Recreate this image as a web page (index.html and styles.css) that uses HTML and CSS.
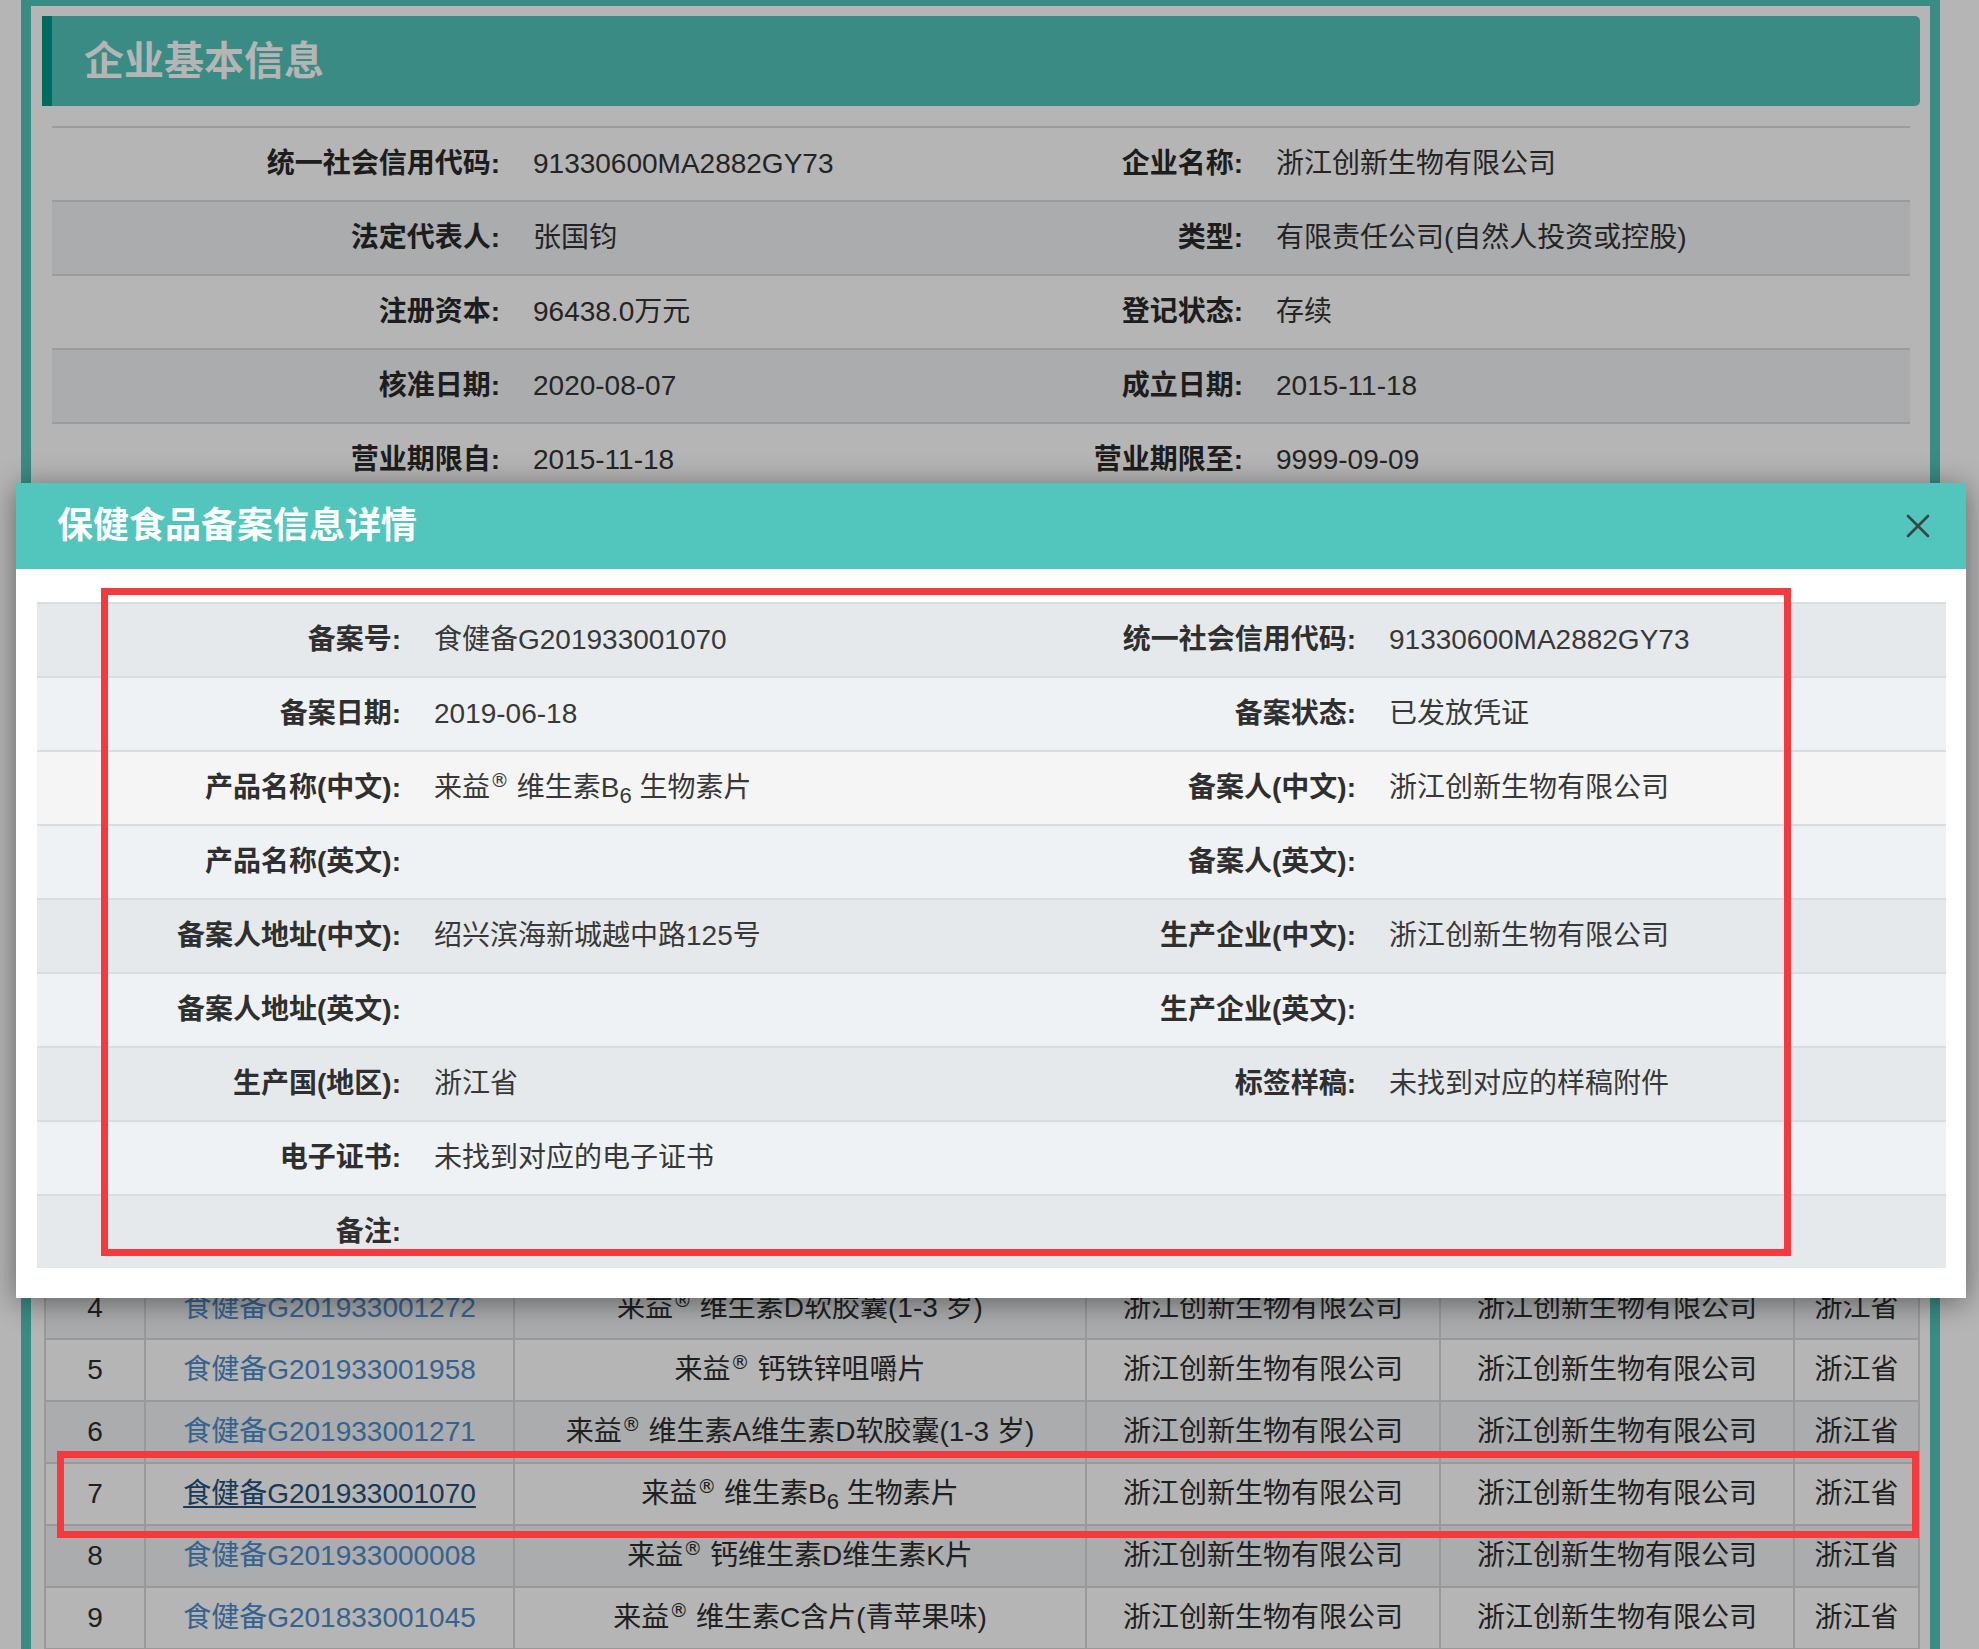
FILE: index.html
```html
<!DOCTYPE html>
<html lang="zh-CN">
<head>
<meta charset="utf-8">
<title>企业基本信息</title>
<link rel="stylesheet" href="styles.css">
</head>
<body>
<div class="panel">
  <div class="panel-head"><h2>企业基本信息</h2></div>
  <div class="info">
    <div class="info-row"><div class="lbl">统一社会信用代码:</div><div class="val">91330600MA2882GY73</div><div class="lbl">企业名称:</div><div class="val">浙江创新生物有限公司</div></div>
    <div class="info-row"><div class="lbl">法定代表人:</div><div class="val">张国钧</div><div class="lbl">类型:</div><div class="val">有限责任公司(自然人投资或控股)</div></div>
    <div class="info-row"><div class="lbl">注册资本:</div><div class="val">96438.0万元</div><div class="lbl">登记状态:</div><div class="val">存续</div></div>
    <div class="info-row"><div class="lbl">核准日期:</div><div class="val">2020-08-07</div><div class="lbl">成立日期:</div><div class="val">2015-11-18</div></div>
    <div class="info-row"><div class="lbl">营业期限自:</div><div class="val">2015-11-18</div><div class="lbl">营业期限至:</div><div class="val">9999-09-09</div></div>
    <div class="info-row"><div class="lbl"></div><div class="val"></div><div class="lbl"></div><div class="val"></div></div>
    <div class="info-row"><div class="lbl"></div><div class="val"></div><div class="lbl"></div><div class="val"></div></div>
    <div class="info-row"><div class="lbl"></div><div class="val"></div><div class="lbl"></div><div class="val"></div></div>
    <div class="info-row"><div class="lbl"></div><div class="val"></div><div class="lbl"></div><div class="val"></div></div>
    <div class="info-row"><div class="lbl"></div><div class="val"></div><div class="lbl"></div><div class="val"></div></div>
  </div>

  <div class="panel-head sec2"></div>
  <table class="list">
    <colgroup><col class="c1"><col class="c2"><col class="c3"><col class="c4"><col class="c5"><col class="c6"></colgroup>
    <thead>
      <tr><th></th><th></th><th></th><th></th><th></th><th></th></tr>
    </thead>
    <tbody>
      <tr><td></td><td></td><td></td><td></td><td></td><td></td></tr>
      <tr><td></td><td></td><td></td><td></td><td></td><td></td></tr>
      <tr><td></td><td></td><td></td><td></td><td></td><td></td></tr>
      <tr><td>4</td><td><a href="#">食健备G201933001272</a></td><td>来益<sup>®</sup> 维生素D软胶囊(1-3 岁)</td><td>浙江创新生物有限公司</td><td>浙江创新生物有限公司</td><td>浙江省</td></tr>
      <tr><td>5</td><td><a href="#">食健备G201933001958</a></td><td>来益<sup>®</sup> 钙铁锌咀嚼片</td><td>浙江创新生物有限公司</td><td>浙江创新生物有限公司</td><td>浙江省</td></tr>
      <tr><td>6</td><td><a href="#">食健备G201933001271</a></td><td>来益<sup>®</sup> 维生素A维生素D软胶囊(1-3 岁)</td><td>浙江创新生物有限公司</td><td>浙江创新生物有限公司</td><td>浙江省</td></tr>
      <tr><td>7</td><td><a href="#" class="active">食健备G201933001070</a></td><td>来益<sup>®</sup> 维生素B<sub>6</sub> 生物素片</td><td>浙江创新生物有限公司</td><td>浙江创新生物有限公司</td><td>浙江省</td></tr>
      <tr><td>8</td><td><a href="#">食健备G201933000008</a></td><td>来益<sup>®</sup> 钙维生素D维生素K片</td><td>浙江创新生物有限公司</td><td>浙江创新生物有限公司</td><td>浙江省</td></tr>
      <tr><td>9</td><td><a href="#">食健备G201833001045</a></td><td>来益<sup>®</sup> 维生素C含片(青苹果味)</td><td>浙江创新生物有限公司</td><td>浙江创新生物有限公司</td><td>浙江省</td></tr>
    </tbody>
  </table>
</div>

<div class="mask"></div>
<div class="mark mark-row"></div>

<div class="modal">
  <div class="modal-head">
    <h3>保健食品备案信息详情</h3>
    <svg class="close" width="26" height="26" viewBox="0 0 26 26"><path d="M3 3 L23 23 M23 3 L3 23" stroke="#374544" stroke-width="2.6" fill="none" stroke-linecap="round"/></svg>
  </div>
  <div class="modal-body">
    <div class="detail">
      <div class="d-row"><div class="lbl">备案号:</div><div class="val">食健备G201933001070</div><div class="lbl">统一社会信用代码:</div><div class="val">91330600MA2882GY73</div></div>
      <div class="d-row"><div class="lbl">备案日期:</div><div class="val">2019-06-18</div><div class="lbl">备案状态:</div><div class="val">已发放凭证</div></div>
      <div class="d-row hover"><div class="lbl">产品名称(中文):</div><div class="val">来益<sup>®</sup> 维生素B<sub>6</sub> 生物素片</div><div class="lbl">备案人(中文):</div><div class="val">浙江创新生物有限公司</div></div>
      <div class="d-row"><div class="lbl">产品名称(英文):</div><div class="val"></div><div class="lbl">备案人(英文):</div><div class="val"></div></div>
      <div class="d-row"><div class="lbl">备案人地址(中文):</div><div class="val">绍兴滨海新城越中路125号</div><div class="lbl">生产企业(中文):</div><div class="val">浙江创新生物有限公司</div></div>
      <div class="d-row"><div class="lbl">备案人地址(英文):</div><div class="val"></div><div class="lbl">生产企业(英文):</div><div class="val"></div></div>
      <div class="d-row"><div class="lbl">生产国(地区):</div><div class="val">浙江省</div><div class="lbl">标签样稿:</div><div class="val">未找到对应的样稿附件</div></div>
      <div class="d-row"><div class="lbl">电子证书:</div><div class="val">未找到对应的电子证书</div><div class="lbl"></div><div class="val"></div></div>
      <div class="d-row"><div class="lbl">备注:</div><div class="val"></div><div class="lbl"></div><div class="val"></div></div>
    </div>
    <div class="mark mark-detail"></div>
  </div>
</div>
</body>
</html>
```

FILE: styles.css
```css
* { box-sizing: border-box; }

html, body {
  margin: 0;
  padding: 0;
}

body {
  position: relative;
  width: 1979px;
  height: 1649px;
  overflow: hidden;
  background: #ffffff;
  font-family: "Liberation Sans", "Noto Sans CJK SC", sans-serif;
  font-size: 28px;
  line-height: 34px;
  color: #333333;
}

sup {
  font-family: "DejaVu Sans", "Liberation Sans", sans-serif;
  font-size: 19px;
  line-height: 0;
  vertical-align: 10px;
}

sub {
  font-size: 22px;
  line-height: 0;
  vertical-align: -6px;
}

/* ---------- background page ---------- */
.panel {
  margin-left: 21px;
  width: 1919px;
  border: 10px solid #52c4bb;
  border-top-width: 6px;
  padding: 10px 10px 0 11px;
  background: #ffffff;
}

.panel-head {
  height: 90px;
  display: flex;
  align-items: center;
  padding-left: 32px;
  background: #52c4bb;
  border-left: 10px solid #009688;
  border-radius: 0 5px 5px 0;
}

.panel-head h2 {
  margin: 0;
  font-size: 40px;
  line-height: 40px;
  font-weight: bold;
  color: #ffffff;
}

.info {
  margin: 20px 10px 0 10px;
}

.info-row {
  display: grid;
  grid-template-columns: 464px 279px 464px 1fr;
  align-items: center;
  height: 74px;
  border-top: 2px solid #dcdcdc;
  background: #ffffff;
}

.info-row:nth-child(even) {
  background: #f0f2f5;
}

.lbl {
  text-align: right;
  padding-right: 16px;
  font-weight: bold;
  color: #2a2a2a;
  white-space: nowrap;
}

.val {
  padding-left: 17px;
  color: #333333;
  white-space: nowrap;
}

.sec2 {
  margin-top: 52px;
}

.list {
  margin: 20px 2px 0 2px;
  width: 1874px;
  table-layout: fixed;
  border-collapse: collapse;
}

.c1 { width: 100px; }
.c2 { width: 369px; }
.c3 { width: 572px; }
.c4 { width: 354px; }
.c5 { width: 354px; }
.c6 { width: 125px; }

.list tr {
  height: 62px;
}

.list th,
.list td {
  padding: 0;
  border: 2px solid #d8d8d8;
  text-align: center;
  vertical-align: middle;
  white-space: nowrap;
  color: #2e2e2e;
  font-weight: normal;
}

.list th {
  background: #f0f2f5;
}

.list tbody tr:nth-child(even) {
  background: #f0f2f5;
}

.list a {
  color: #4c8cc9;
  text-decoration: none;
}

.list a.active {
  color: #24527c;
  text-decoration: underline;
  text-underline-offset: 3px;
}

/* ---------- overlay ---------- */
.mask {
  position: fixed;
  inset: 0;
  background: rgba(0, 0, 0, 0.29);
}

.mark {
  position: absolute;
  border: 7px solid #f43a3e;
}

.mark-row {
  left: 57px;
  top: 1451px;
  width: 1862px;
  height: 87px;
}

/* ---------- modal ---------- */
.modal {
  position: absolute;
  left: 16px;
  top: 483px;
  width: 1950px;
  background: #ffffff;
  box-shadow: 0 4px 28px rgba(0, 0, 0, 0.45);
}

.modal-head {
  height: 86px;
  display: flex;
  align-items: center;
  justify-content: space-between;
  padding: 0 35px 0 41px;
  background: #52c5bd;
}

.modal-head h3 {
  margin: 0;
  font-size: 36px;
  line-height: 40px;
  font-weight: bold;
  color: #ffffff;
}

.close {
  display: block;
}

.modal-body {
  position: relative;
  padding: 33px 20px 30px 21px;
}

.detail {
  width: 1909px;
}

.d-row {
  display: grid;
  grid-template-columns: 382px 573px 382px 1fr;
  align-items: center;
  height: 74px;
  border-top: 2px solid #d9dce0;
  background: #e6e9ec;
}

.d-row .lbl {
  padding-right: 18px;
  color: #2f2f2f;
}

.d-row .val {
  padding-left: 15px;
  color: #383838;
}

.d-row:nth-child(even) {
  background: #eff2f5;
}

.d-row.hover {
  background: #f5f5f6;
}

.mark-detail {
  left: 85px;
  top: 19px;
  width: 1690px;
  height: 668px;
}
```
